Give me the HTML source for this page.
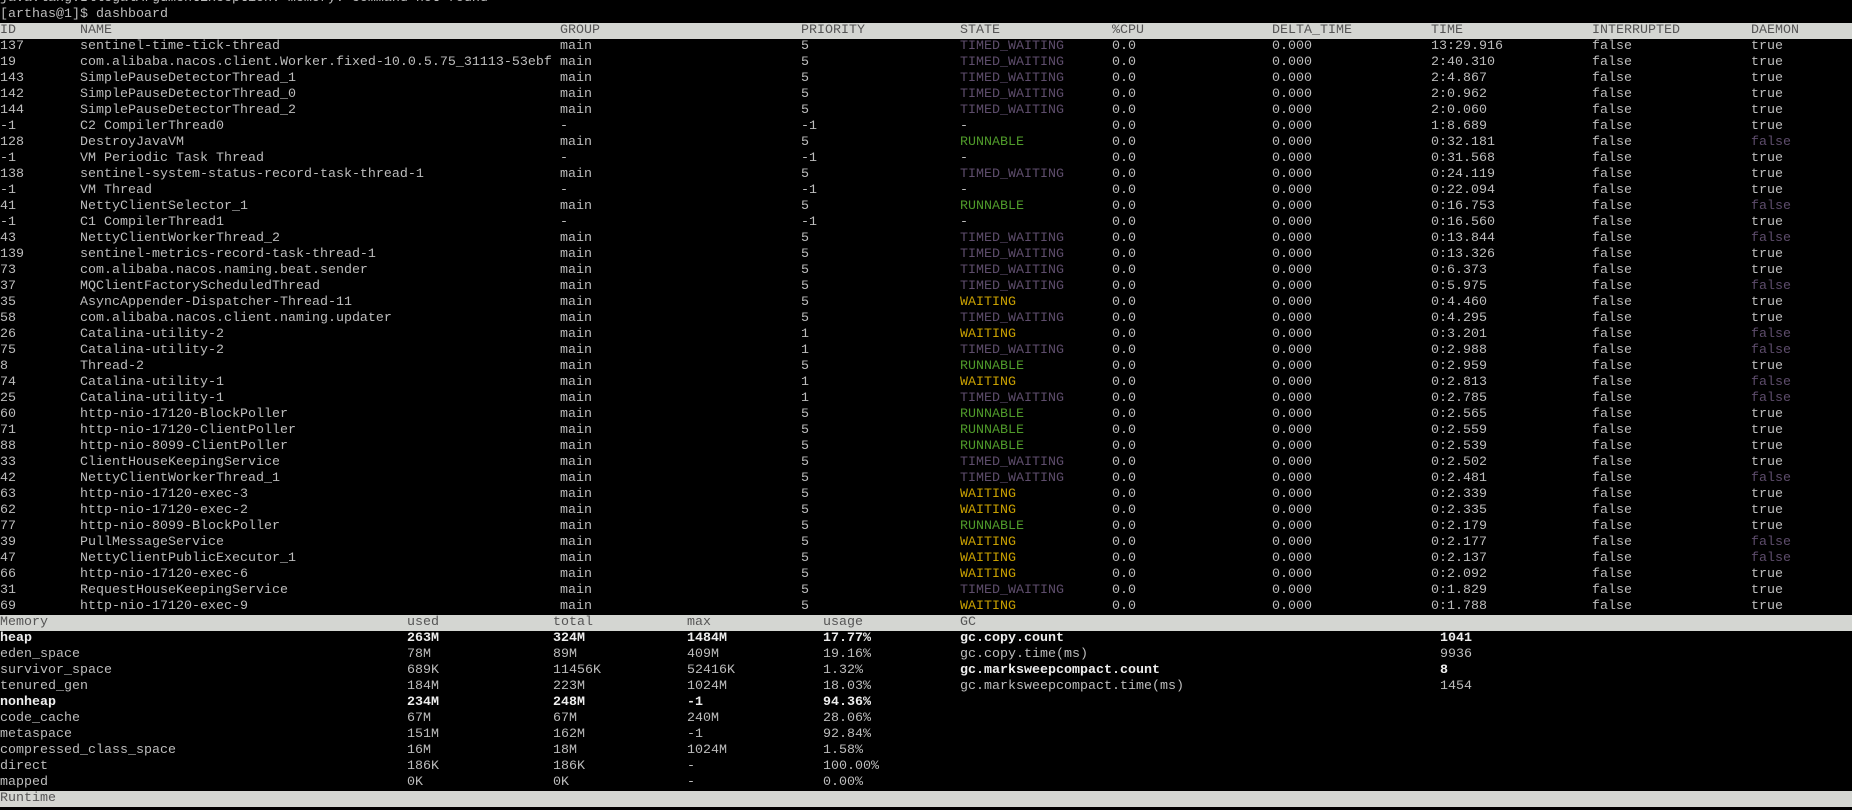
<!DOCTYPE html>
<html><head><meta charset="utf-8"><style>
html,body{margin:0;padding:0;background:#000;width:1852px;height:810px;overflow:hidden}
body{position:relative;font-family:"Liberation Mono",monospace;font-size:13.33px;color:#bdbdbd}
.r{position:absolute;left:0;width:1852px;height:16px;line-height:16px;white-space:pre;transform:translateY(2px)}
.r span{position:absolute;top:0}
.h{background:#d4d6d2;color:#555}
.t span:nth-child(1){left:0}.t span:nth-child(2){left:80px}.t span:nth-child(3){left:560px}.t span:nth-child(4){left:801px}.t span:nth-child(5){left:960px}.t span:nth-child(6){left:1112px}.t span:nth-child(7){left:1272px}.t span:nth-child(8){left:1431px}.t span:nth-child(9){left:1592px}.t span:nth-child(10){left:1751px}
.m span:nth-child(1){left:0}.m span:nth-child(2){left:407px}.m span:nth-child(3){left:553px}.m span:nth-child(4){left:687px}.m span:nth-child(5){left:823px}.m span:nth-child(6){left:960px}.m span:nth-child(7){left:1440px}
.tw{color:#5e4d6c}.rn{color:#4f9a2a}.wt{color:#c9a000}.df{color:#5e4d6c}
.b{font-weight:bold;color:#eee}
</style></head><body>
<div class="r" style="top:-11px">java.lang.IllegalArgumentException: memory: command not found</div>
<div class="r" style="top:5px">[arthas@1]$ dashboard</div>
<div class="r t h" style="top:21px"><span>ID</span><span>NAME</span><span>GROUP</span><span>PRIORITY</span><span>STATE</span><span>%CPU</span><span>DELTA_TIME</span><span>TIME</span><span>INTERRUPTED</span><span>DAEMON</span></div>
<div class="r t" style="top:37px"><span>137</span><span>sentinel-time-tick-thread</span><span>main</span><span>5</span><span class="tw">TIMED_WAITING</span><span>0.0</span><span>0.000</span><span>13:29.916</span><span>false</span><span>true</span></div>
<div class="r t" style="top:53px"><span>19</span><span>com.alibaba.nacos.client.Worker.fixed-10.0.5.75_31113-53ebf</span><span>main</span><span>5</span><span class="tw">TIMED_WAITING</span><span>0.0</span><span>0.000</span><span>2:40.310</span><span>false</span><span>true</span></div>
<div class="r t" style="top:69px"><span>143</span><span>SimplePauseDetectorThread_1</span><span>main</span><span>5</span><span class="tw">TIMED_WAITING</span><span>0.0</span><span>0.000</span><span>2:4.867</span><span>false</span><span>true</span></div>
<div class="r t" style="top:85px"><span>142</span><span>SimplePauseDetectorThread_0</span><span>main</span><span>5</span><span class="tw">TIMED_WAITING</span><span>0.0</span><span>0.000</span><span>2:0.962</span><span>false</span><span>true</span></div>
<div class="r t" style="top:101px"><span>144</span><span>SimplePauseDetectorThread_2</span><span>main</span><span>5</span><span class="tw">TIMED_WAITING</span><span>0.0</span><span>0.000</span><span>2:0.060</span><span>false</span><span>true</span></div>
<div class="r t" style="top:117px"><span>-1</span><span>C2 CompilerThread0</span><span>-</span><span>-1</span><span>-</span><span>0.0</span><span>0.000</span><span>1:8.689</span><span>false</span><span>true</span></div>
<div class="r t" style="top:133px"><span>128</span><span>DestroyJavaVM</span><span>main</span><span>5</span><span class="rn">RUNNABLE</span><span>0.0</span><span>0.000</span><span>0:32.181</span><span>false</span><span class="df">false</span></div>
<div class="r t" style="top:149px"><span>-1</span><span>VM Periodic Task Thread</span><span>-</span><span>-1</span><span>-</span><span>0.0</span><span>0.000</span><span>0:31.568</span><span>false</span><span>true</span></div>
<div class="r t" style="top:165px"><span>138</span><span>sentinel-system-status-record-task-thread-1</span><span>main</span><span>5</span><span class="tw">TIMED_WAITING</span><span>0.0</span><span>0.000</span><span>0:24.119</span><span>false</span><span>true</span></div>
<div class="r t" style="top:181px"><span>-1</span><span>VM Thread</span><span>-</span><span>-1</span><span>-</span><span>0.0</span><span>0.000</span><span>0:22.094</span><span>false</span><span>true</span></div>
<div class="r t" style="top:197px"><span>41</span><span>NettyClientSelector_1</span><span>main</span><span>5</span><span class="rn">RUNNABLE</span><span>0.0</span><span>0.000</span><span>0:16.753</span><span>false</span><span class="df">false</span></div>
<div class="r t" style="top:213px"><span>-1</span><span>C1 CompilerThread1</span><span>-</span><span>-1</span><span>-</span><span>0.0</span><span>0.000</span><span>0:16.560</span><span>false</span><span>true</span></div>
<div class="r t" style="top:229px"><span>43</span><span>NettyClientWorkerThread_2</span><span>main</span><span>5</span><span class="tw">TIMED_WAITING</span><span>0.0</span><span>0.000</span><span>0:13.844</span><span>false</span><span class="df">false</span></div>
<div class="r t" style="top:245px"><span>139</span><span>sentinel-metrics-record-task-thread-1</span><span>main</span><span>5</span><span class="tw">TIMED_WAITING</span><span>0.0</span><span>0.000</span><span>0:13.326</span><span>false</span><span>true</span></div>
<div class="r t" style="top:261px"><span>73</span><span>com.alibaba.nacos.naming.beat.sender</span><span>main</span><span>5</span><span class="tw">TIMED_WAITING</span><span>0.0</span><span>0.000</span><span>0:6.373</span><span>false</span><span>true</span></div>
<div class="r t" style="top:277px"><span>37</span><span>MQClientFactoryScheduledThread</span><span>main</span><span>5</span><span class="tw">TIMED_WAITING</span><span>0.0</span><span>0.000</span><span>0:5.975</span><span>false</span><span class="df">false</span></div>
<div class="r t" style="top:293px"><span>35</span><span>AsyncAppender-Dispatcher-Thread-11</span><span>main</span><span>5</span><span class="wt">WAITING</span><span>0.0</span><span>0.000</span><span>0:4.460</span><span>false</span><span>true</span></div>
<div class="r t" style="top:309px"><span>58</span><span>com.alibaba.nacos.client.naming.updater</span><span>main</span><span>5</span><span class="tw">TIMED_WAITING</span><span>0.0</span><span>0.000</span><span>0:4.295</span><span>false</span><span>true</span></div>
<div class="r t" style="top:325px"><span>26</span><span>Catalina-utility-2</span><span>main</span><span>1</span><span class="wt">WAITING</span><span>0.0</span><span>0.000</span><span>0:3.201</span><span>false</span><span class="df">false</span></div>
<div class="r t" style="top:341px"><span>75</span><span>Catalina-utility-2</span><span>main</span><span>1</span><span class="tw">TIMED_WAITING</span><span>0.0</span><span>0.000</span><span>0:2.988</span><span>false</span><span class="df">false</span></div>
<div class="r t" style="top:357px"><span>8</span><span>Thread-2</span><span>main</span><span>5</span><span class="rn">RUNNABLE</span><span>0.0</span><span>0.000</span><span>0:2.959</span><span>false</span><span>true</span></div>
<div class="r t" style="top:373px"><span>74</span><span>Catalina-utility-1</span><span>main</span><span>1</span><span class="wt">WAITING</span><span>0.0</span><span>0.000</span><span>0:2.813</span><span>false</span><span class="df">false</span></div>
<div class="r t" style="top:389px"><span>25</span><span>Catalina-utility-1</span><span>main</span><span>1</span><span class="tw">TIMED_WAITING</span><span>0.0</span><span>0.000</span><span>0:2.785</span><span>false</span><span class="df">false</span></div>
<div class="r t" style="top:405px"><span>60</span><span>http-nio-17120-BlockPoller</span><span>main</span><span>5</span><span class="rn">RUNNABLE</span><span>0.0</span><span>0.000</span><span>0:2.565</span><span>false</span><span>true</span></div>
<div class="r t" style="top:421px"><span>71</span><span>http-nio-17120-ClientPoller</span><span>main</span><span>5</span><span class="rn">RUNNABLE</span><span>0.0</span><span>0.000</span><span>0:2.559</span><span>false</span><span>true</span></div>
<div class="r t" style="top:437px"><span>88</span><span>http-nio-8099-ClientPoller</span><span>main</span><span>5</span><span class="rn">RUNNABLE</span><span>0.0</span><span>0.000</span><span>0:2.539</span><span>false</span><span>true</span></div>
<div class="r t" style="top:453px"><span>33</span><span>ClientHouseKeepingService</span><span>main</span><span>5</span><span class="tw">TIMED_WAITING</span><span>0.0</span><span>0.000</span><span>0:2.502</span><span>false</span><span>true</span></div>
<div class="r t" style="top:469px"><span>42</span><span>NettyClientWorkerThread_1</span><span>main</span><span>5</span><span class="tw">TIMED_WAITING</span><span>0.0</span><span>0.000</span><span>0:2.481</span><span>false</span><span class="df">false</span></div>
<div class="r t" style="top:485px"><span>63</span><span>http-nio-17120-exec-3</span><span>main</span><span>5</span><span class="wt">WAITING</span><span>0.0</span><span>0.000</span><span>0:2.339</span><span>false</span><span>true</span></div>
<div class="r t" style="top:501px"><span>62</span><span>http-nio-17120-exec-2</span><span>main</span><span>5</span><span class="wt">WAITING</span><span>0.0</span><span>0.000</span><span>0:2.335</span><span>false</span><span>true</span></div>
<div class="r t" style="top:517px"><span>77</span><span>http-nio-8099-BlockPoller</span><span>main</span><span>5</span><span class="rn">RUNNABLE</span><span>0.0</span><span>0.000</span><span>0:2.179</span><span>false</span><span>true</span></div>
<div class="r t" style="top:533px"><span>39</span><span>PullMessageService</span><span>main</span><span>5</span><span class="wt">WAITING</span><span>0.0</span><span>0.000</span><span>0:2.177</span><span>false</span><span class="df">false</span></div>
<div class="r t" style="top:549px"><span>47</span><span>NettyClientPublicExecutor_1</span><span>main</span><span>5</span><span class="wt">WAITING</span><span>0.0</span><span>0.000</span><span>0:2.137</span><span>false</span><span class="df">false</span></div>
<div class="r t" style="top:565px"><span>66</span><span>http-nio-17120-exec-6</span><span>main</span><span>5</span><span class="wt">WAITING</span><span>0.0</span><span>0.000</span><span>0:2.092</span><span>false</span><span>true</span></div>
<div class="r t" style="top:581px"><span>31</span><span>RequestHouseKeepingService</span><span>main</span><span>5</span><span class="tw">TIMED_WAITING</span><span>0.0</span><span>0.000</span><span>0:1.829</span><span>false</span><span>true</span></div>
<div class="r t" style="top:597px"><span>69</span><span>http-nio-17120-exec-9</span><span>main</span><span>5</span><span class="wt">WAITING</span><span>0.0</span><span>0.000</span><span>0:1.788</span><span>false</span><span>true</span></div>
<div class="r m h" style="top:613px"><span>Memory</span><span>used</span><span>total</span><span>max</span><span>usage</span><span>GC</span><span></span></div>
<div class="r m" style="top:629px"><span class="b">heap</span><span class="b">263M</span><span class="b">324M</span><span class="b">1484M</span><span class="b">17.77%</span><span class="b">gc.copy.count</span><span class="b">1041</span></div>
<div class="r m" style="top:645px"><span>eden_space</span><span>78M</span><span>89M</span><span>409M</span><span>19.16%</span><span>gc.copy.time(ms)</span><span>9936</span></div>
<div class="r m" style="top:661px"><span>survivor_space</span><span>689K</span><span>11456K</span><span>52416K</span><span>1.32%</span><span class="b">gc.marksweepcompact.count</span><span class="b">8</span></div>
<div class="r m" style="top:677px"><span>tenured_gen</span><span>184M</span><span>223M</span><span>1024M</span><span>18.03%</span><span>gc.marksweepcompact.time(ms)</span><span>1454</span></div>
<div class="r m" style="top:693px"><span class="b">nonheap</span><span class="b">234M</span><span class="b">248M</span><span class="b">-1</span><span class="b">94.36%</span></div>
<div class="r m" style="top:709px"><span>code_cache</span><span>67M</span><span>67M</span><span>240M</span><span>28.06%</span></div>
<div class="r m" style="top:725px"><span>metaspace</span><span>151M</span><span>162M</span><span>-1</span><span>92.84%</span></div>
<div class="r m" style="top:741px"><span>compressed_class_space</span><span>16M</span><span>18M</span><span>1024M</span><span>1.58%</span></div>
<div class="r m" style="top:757px"><span>direct</span><span>186K</span><span>186K</span><span>-</span><span>100.00%</span></div>
<div class="r m" style="top:773px"><span>mapped</span><span>0K</span><span>0K</span><span>-</span><span>0.00%</span></div>
<div class="r h" style="top:789px">Runtime</div>
</body></html>
